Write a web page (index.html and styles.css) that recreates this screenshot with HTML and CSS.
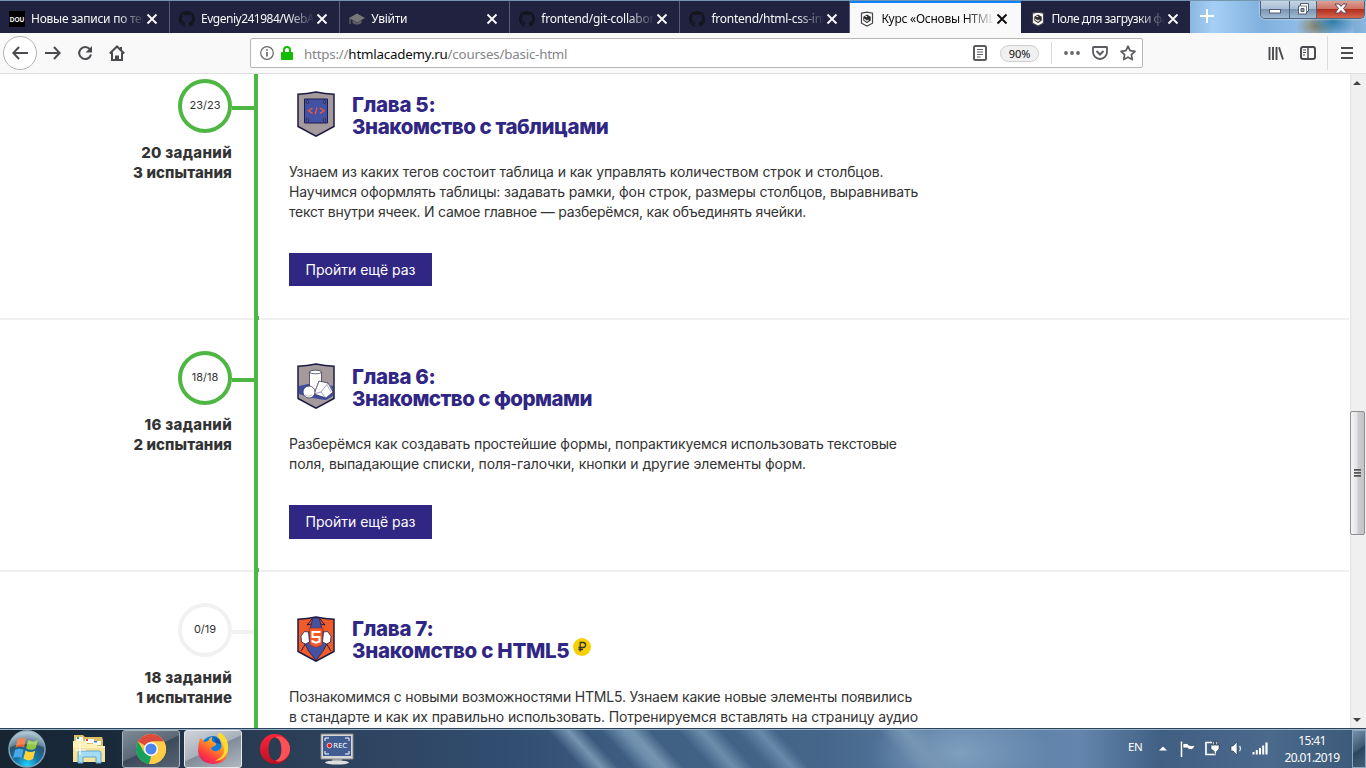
FILE: index.html
```html
<!DOCTYPE html>
<html lang="ru">
<head>
<meta charset="utf-8">
<title>Курс «Основы HTML»</title>
<link rel="stylesheet" href="styles.css">
</head>
<body>
<svg class="defs" aria-hidden="true">
  <defs>
    <symbol id="x" viewBox="0 0 12 12"><path d="M1.5 1.5l9 9M10.5 1.5l-9 9" stroke="currentColor" stroke-width="1.9" fill="none"/></symbol>
    <symbol id="github" viewBox="0 0 16 16"><path fill="#14151f" d="M8 0C3.58 0 0 3.58 0 8c0 3.54 2.29 6.53 5.47 7.59.4.07.55-.17.55-.38v-1.49c-2.01.37-2.53-.49-2.69-.94-.09-.23-.48-.94-.82-1.13-.28-.15-.68-.52-.01-.53.63-.01 1.08.58 1.23.82.72 1.21 1.87.87 2.33.66.07-.52.28-.87.51-1.07-1.78-.2-3.64-.89-3.64-3.95 0-.87.31-1.59.82-2.15-.08-.2-.36-1.02.08-2.12 0 0 .67-.21 2.2.82a7.5 7.5 0 0 1 4 0c1.53-1.04 2.2-.82 2.2-.82.44 1.1.16 1.92.08 2.12.51.56.82 1.27.82 2.15 0 3.07-1.87 3.75-3.65 3.95.29.25.54.73.54 1.48v2.2c0 .21.15.46.55.38A8.01 8.01 0 0 0 16 8c0-4.42-3.58-8-8-8z"/></symbol>
    <symbol id="academy" viewBox="0 0 16 16"><path d="M2.500 2.200L8 1.200l5.500 1v10L8 15l-5.500-2.800z" fill="#fff" stroke="#444" stroke-width="1.200"/><path d="M4.300 5.700L8 3.500l3.700 2.200v3.800L8 12.300 4.300 9.500z" fill="#2c2c2c"/><path d="M5 7.500l3 1.700 1.500-1v1.800L8 11 5 9z" fill="#ddd"/><path d="M7 4.700l1.500.8-1 .8-1.500-.8z" fill="#fff"/></symbol>
    <symbol id="shield" viewBox="0 0 38 46"><path d="M1 3.200Q10 2.800 19 1q9 1.800 18 2.200V35.500L19 45.200 1 35.500z" stroke="#1b1b45" stroke-width="1.500"/></symbol>
  </defs>
</svg>

<header class="browser">
  <div class="tabs">
    <div class="tab"><span class="dou">DOU</span><span class="tab-title">Новые записи по тем</span><svg class="close"><use href="#x"/></svg></div>
    <div class="tab"><svg class="fav"><use href="#github"/></svg><span class="tab-title tight">Evgeniy241984/WebApp</span><svg class="close"><use href="#x"/></svg></div>
    <div class="tab"><svg class="fav" viewBox="0 0 16 16"><path d="M0 7l8-4.500L16 7l-8 4.500z" fill="#777"/><path d="M3.500 9v3q4.500 3 9 0V9L8 11.700z" fill="#606060"/><path d="M1 7v6" stroke="#777"/></svg><span class="tab-title">Увійти</span><svg class="close"><use href="#x"/></svg></div>
    <div class="tab"><svg class="fav"><use href="#github"/></svg><span class="tab-title">frontend/git-collabora</span><svg class="close"><use href="#x"/></svg></div>
    <div class="tab"><svg class="fav"><use href="#github"/></svg><span class="tab-title">frontend/html-css-intro</span><svg class="close"><use href="#x"/></svg></div>
    <div class="tab active"><svg class="fav"><use href="#academy"/></svg><span class="tab-title">Курс «Основы HTML»</span><svg class="close"><use href="#x"/></svg></div>
    <div class="tab last"><svg class="fav"><use href="#academy"/></svg><span class="tab-title tight">Поле для загрузки фа</span><svg class="close"><use href="#x"/></svg></div>
    <div class="glass">
      <svg class="plus" viewBox="0 0 14 14"><path d="M7 0v14M0 7h14" stroke="#fff" stroke-width="2"/></svg>
      <div class="window-buttons">
        <span class="wb min"><svg width="28" height="17" viewBox="0 0 28 17"><rect x="8.500" y="8.500" width="11" height="3.500" fill="#fff" stroke="#555a70"/></svg></span>
        <span class="wb restore"><svg width="26" height="17" viewBox="0 0 26 17"><path d="M10.500 2.500h8v8h-2v2.500h-8v-8h2z" fill="#fff" stroke="#555a70"/><path d="M11 7.500h3v3h-3z" fill="#8ca1bb" stroke="#555a70"/><path d="M11 5h5.500v6" fill="none" stroke="#777e91"/></svg></span>
        <span class="wb shut"><svg width="47" height="17" viewBox="0 0 47 17"><path d="M18 3h4l2 2.500L26 3h4l-3.500 4.500L30 12h-4l-2-2.500L22 12h-4l3.500-4.500z" fill="#fff" stroke="#604655"/></svg></span>
      </div>
    </div>
  </div>
  <div class="toolbar">
    <span class="back"><svg width="16" height="14" viewBox="0 0 16 14"><path d="M7 1L1.300 7 7 13M1.500 7H16" fill="none" stroke="#4a4a4f" stroke-width="2"/></svg></span>
    <svg class="fwd" width="16" height="14" viewBox="0 0 16 14"><path d="M9 1l5.700 6L9 13M14.500 7H0" fill="none" stroke="#4a4a4f" stroke-width="2"/></svg>
    <svg class="reload" width="16" height="16" viewBox="0 0 16 16"><path d="M12.800 4.200A6 6 0 1 0 14 9.500" fill="none" stroke="#4a4a4f" stroke-width="2"/><path d="M15 1v6.500H8.500z" fill="#4a4a4f"/></svg>
    <svg class="home" width="16" height="16" viewBox="0 0 16 16"><path d="M.800 8.500L8 1.500l7.200 7M3 7.500V15h10V7.500" fill="none" stroke="#4a4a4f" stroke-width="2"/><path d="M6 15v-4.500h4V15zM11 2h2v4l-2-2z" fill="#4a4a4f"/></svg>
    <div class="urlbar">
      <svg class="info" width="14" height="14" viewBox="0 0 14 14"><circle cx="7" cy="7" r="6.300" fill="none" stroke="#666" stroke-width="1.200"/><path d="M7 6v4.500M7 3.300v1.500" stroke="#555" stroke-width="1.500"/></svg>
      <svg class="lock" width="12" height="14" viewBox="0 0 12 14"><path d="M3 7V4a3 3 0 0 1 6 0v3" fill="none" stroke="#12bc00" stroke-width="2"/><rect y="6" width="12" height="8" rx="1" fill="#12bc00"/></svg>
      <span class="url">https://<b>htmlacademy.ru</b>/courses/basic-html</span>
      <svg class="reader" width="14" height="16" viewBox="0 0 14 16"><rect x="1" y="1" width="12" height="14" rx="1.500" fill="none" stroke="#5c5c60" stroke-width="2"/><path d="M4 4.500h6M4 7h6M4 9.500h6M4 12h3.500" stroke="#5c5c60"/></svg>
      <span class="zoom">90%</span>
      <span class="divider"></span>
      <svg class="dots" width="16" height="4" viewBox="0 0 16 4"><g fill="#66666a"><circle cx="2" cy="2" r="1.900"/><circle cx="8" cy="2" r="1.900"/><circle cx="14" cy="2" r="1.900"/></g></svg>
      <svg class="pocket" width="16" height="15" viewBox="0 0 16 15"><path d="M1.500 1h13q.5 0 .5.5V6a7 7 0 0 1-14 0V1.500q0-.5.5-.5z" fill="none" stroke="#5c5c60" stroke-width="1.800"/><path d="M4.500 5L8 8.500 11.500 5" fill="none" stroke="#5c5c60" stroke-width="2"/></svg>
      <svg class="star" width="16" height="16" viewBox="0 0 16 16"><path d="M8 1.200l2.100 4.500 4.900.6-3.600 3.400.9 4.900L8 12.200l-4.300 2.400.9-4.900L1 6.300l4.900-.6z" fill="none" stroke="#5c5c60" stroke-width="1.700" stroke-linejoin="round"/></svg>
    </div>
    <svg class="library" width="16" height="14" viewBox="0 0 16 14"><path d="M1.500 1v13M5 1v13M8.500 1v13M11 1.200L15 13.500" stroke="#4a4a4f" stroke-width="1.900"/></svg>
    <svg class="sidebar" width="16" height="14" viewBox="0 0 16 14"><rect x="1" y="1" width="14" height="12" rx="2" fill="none" stroke="#4a4a4f" stroke-width="2"/><path d="M8 1v12" stroke="#4a4a4f" stroke-width="1.500"/><path d="M3 4h3M3 6.500h3M3 9h2" stroke="#4a4a4f"/></svg>
    <span class="menu"><svg width="12" height="12" viewBox="0 0 12 12"><path d="M0 1h12M0 6h12M0 11h12" stroke="#4a4a4f" stroke-width="2"/></svg></span>
  </div>
</header>

<div class="viewport">
  <main class="course">
    <section class="chapter first">
      <div class="progress"><div class="ring">23/23</div><p class="tasks"><span class="count">20 заданий</span><br><span>3 испытания</span></p></div>
      <div class="body">
        <div class="head">
          <svg class="badge" viewBox="0 0 38 46"><use href="#shield" fill="#a49a9c"/><path d="M7.500 8h23v24h-23z" fill="#4352a3" stroke="#1b1b55"/><g fill="#56669b" stroke="#1b1b45" stroke-width=".7"><circle cx="10.500" cy="11" r="1.400"/><circle cx="27.500" cy="11" r="1.400"/><circle cx="10.500" cy="29" r="1.400"/><circle cx="27.500" cy="29" r="1.400"/></g><path d="M15.500 17L11.500 19.700l4 2.700M23 17l4 2.700-4 2.700M20 16.500l-1.800 6.500" fill="none" stroke="#f1583a" stroke-width="1.300"/></svg>
          <h2><span class="h">Глава 5:</span><br><span class="h5">Знакомство с таблицами</span></h2>
        </div>
        <p class="text"><span class="l1">Узнаем из каких тегов состоит таблица и как управлять количеством строк и столбцов.</span><br><span class="l2">Научимся оформлять таблицы: задавать рамки, фон строк, размеры столбцов, выравнивать</span><br><span class="l3">текст внутри ячеек. И самое главное — разберёмся, как объединять ячейки.</span></p>
        <a class="again">Пройти ещё раз</a>
      </div>
    </section>
    <section class="chapter">
      <div class="progress"><div class="ring">18/18</div><p class="tasks"><span class="count">16 заданий</span><br><span>2 испытания</span></p></div>
      <div class="body">
        <div class="head">
          <svg class="badge" viewBox="0 0 38 46"><use href="#shield" fill="#a49a9c"/><path d="M2 23l9-2h17l8 2v10l-7 4q-12-1-27-6z" fill="#3e4da0"/><g fill="#fff" stroke="#25254c" stroke-width=".7"><path d="M12.500 9v18q6 2 12 0V9z"/><ellipse cx="18.500" cy="9" rx="6" ry="1.800"/><path d="M22 18l9 2 5 9-7 6-12-4z"/><path d="M22 18l-5 13 7-2 7-9M24 29l5 6" fill="none" stroke="#77778e"/><circle cx="12" cy="29" r="6"/><path d="M8 32q3 2.500 7 0M30 22l4 7M32 21l3 6" fill="none" stroke="#9a9aad"/></g></svg>
          <h2><span class="h">Глава 6:</span><br><span class="h6">Знакомство с формами</span></h2>
        </div>
        <p class="text"><span class="l4">Разберёмся как создавать простейшие формы, попрактикуемся использовать текстовые</span><br><span class="l5">поля, выпадающие списки, поля-галочки, кнопки и другие элементы форм.</span></p>
        <a class="again">Пройти ещё раз</a>
      </div>
    </section>
    <section class="chapter todo">
      <div class="progress"><div class="ring">0/19</div><p class="tasks"><span class="count">18 заданий</span><br><span>1 испытание</span></p></div>
      <div class="body">
        <div class="head">
          <svg class="badge" viewBox="0 0 38 46"><use href="#shield" fill="#f15a29"/><path d="M15.500 2.500L19 1.500l3.500 1 2 9 6 15-4 8L19 44.500 11.500 35l-4-8 6-15z" fill="#4352a3" stroke="#1b1b45" stroke-width=".7"/><path d="M15 3l-5 6 4-1M23 3l5 6-4-1M4 35l5-8M34 35l-5-8" stroke="#1b1b45" fill="none"/><path d="M12 12h14l-1 17-6 2.500-6-2.500z" fill="#f15a29" stroke="#8b2f31" stroke-width=".7"/><path d="M23.500 16h-8v5h7v4.500L19 26.800l-3.500-1.300v-1.500" fill="none" stroke="#fff" stroke-width="2"/><path d="M4 20l3.500-4.500 4 .5 1 10-4 2-4-2zM34 20l-3.500-4.500-4 .5-1 10 4 2 4-2z" fill="#fff" stroke="#25254c" stroke-width=".8"/></svg>
          <h2><span class="h">Глава 7:</span><br><span class="h7">Знакомство с HTML5</span><svg class="coin" viewBox="0 0 18 18"><circle cx="9" cy="9" r="9" fill="#f8d000"/><path d="M7.200 13.500v-9h2.900a2.500 2.500 0 0 1 0 5H5.500M5.500 11.500h4.500" fill="none" stroke="#333" stroke-width="1.300"/></svg></h2>
        </div>
        <p class="text"><span class="l6">Познакомимся с новыми возможностями HTML5. Узнаем какие новые элементы появились</span><br><span class="l7">в стандарте и как их правильно использовать. Потренируемся вставлять на страницу аудио</span></p>
      </div>
    </section>
  </main>
  <aside class="scroll">
    <svg class="up" width="8" height="4" viewBox="0 0 8 4"><path d="M0 4l4-4 4 4z" fill="#444"/></svg>
    <div class="thumb"><i></i><i></i><i></i></div>
    <svg class="down" width="8" height="4" viewBox="0 0 8 4"><path d="M0 0l4 4 4-4z" fill="#444"/></svg>
  </aside>
</div>

<footer class="taskbar">
  <svg class="orb" width="40" height="38" viewBox="0 0 40 38"><defs><radialGradient id="orb" cx=".5" cy=".95" r=".9"><stop offset="0" stop-color="#21d5ff"/><stop offset=".35" stop-color="#1678ad"/><stop offset=".7" stop-color="#2c536f"/><stop offset="1" stop-color="#9cb9c9"/></radialGradient></defs><circle cx="20" cy="19" r="18" fill="url(#orb)" stroke="#7fa3b6" stroke-width="1.500"/><path d="M10.500 9.500q4-3 8.500-.5l-2 8.500q-4-2.300-8.500.2z" fill="#f0652b"/><path d="M21 10q5 3 10-.3l-2.300 8.500q-5 3-9.500 0z" fill="#93c83e"/><path d="M8 20q4.500-2.500 8.500-.2l-2 8.200q-4-2.200-8.500.2z" fill="#48a8e9"/><path d="M18.500 20.500q5 3 9.800.2L26 29q-5 3-9.500-.4z" fill="#ffd23b"/><path d="M3 17A17 17 0 0 1 37 17Q20 11 3 17z" fill="#fff" opacity=".22"/></svg>
  <svg class="explorer" width="34" height="32" viewBox="0 0 34 32"><path d="M2 2h9l2 2h17l1 3v20H2z" fill="#d9bd62"/><path d="M4 4h7v4H4zM13 6h9v4h-9zM21 8h8v4h-8z" fill="#fff"/><path d="M5 4h2v2H5z" fill="#25a55a"/><path d="M14 6h2v2h-2z" fill="#d54a28"/><path d="M22 8h3v1.500h-3z" fill="#2b83d0"/><path d="M1 8h12l2 3h8l2 2h8v16H1z" fill="#f5e39b"/><path d="M1 8h12l2 3h8l2 2h8v2H1z" fill="#fff2b8"/><path d="M6 30V20q0-2 2-2h19q2 0 2 2v10h-5v-6H11v6z" fill="#a4ddf3" stroke="#63a5c8"/><path d="M8 11v11M3 17h11" stroke="#fff" stroke-width="1.200"/></svg>
  <span class="app"><svg width="32" height="32" viewBox="0 0 32 32"><circle cx="16" cy="16" r="15" fill="#fbc94b"/><path d="M16 16L3 8.500A15 15 0 0 1 29 8.500H16z" fill="#dc4a3d"/><path d="M3 8.500l6.500 11.200 6.500 3.800L14 31A15 15 0 0 1 3 8.500z" fill="#18a05f"/><path d="M22.500 19.700L14 31h2A15 15 0 0 0 29 8.500H16z" fill="#ffcd46"/><circle cx="16" cy="16" r="7" fill="#fff"/><circle cx="16" cy="16" r="5.600" fill="#4a86ee"/></svg></span>
  <span class="app on"><svg width="32" height="32" viewBox="0 0 32 32"><defs><linearGradient id="fox" x1=".8" y1="0" x2=".2" y2="1"><stop offset="0" stop-color="#fff33a"/><stop offset=".4" stop-color="#ff9522"/><stop offset=".75" stop-color="#ff3b40"/><stop offset="1" stop-color="#e41673"/></linearGradient></defs><circle cx="16" cy="15" r="12" fill="#087ee1"/><path d="M16 4q6 1 8 7l-5-1z" fill="#154bb7"/><path d="M3 5q3 1 4 4l4-1q2-4 4-4-1 3 1 5 4 1 3 3l-5 3q2 4 6 3 6-2 4-8-1-5-4-6 1-4 3-4 9 5 8 17-1 14-15 14Q2 30 1 18 1 11 3 5z" fill="url(#fox)"/><path d="M21 4q1-3 3-4 8 7 7 17-3 11-13 11 11-5 9-13-1-6-6-11z" fill="#ffdb31"/></svg></span>
  <svg class="opera" width="32" height="32" viewBox="0 0 32 32"><defs><linearGradient id="op" x2=".1" y2="1"><stop stop-color="#ff2638"/><stop offset="1" stop-color="#bd1022"/></linearGradient></defs><path fill-rule="evenodd" d="M16 1a15 15 0 1 0 0 30 15 15 0 1 0 0-30zm0 3.500c4 0 6.500 5 6.500 11.500S20 27.500 16 27.500 9.500 22.500 9.500 16 12 4.500 16 4.500z" fill="url(#op)"/><path d="M16 4.500q4-2.500 8.500.5Q31 9 31 16t-6.500 11q-4.500 3-8.500.5c4 0 6.500-5 6.500-11.500S20 4.500 16 4.500z" fill="#fd5057"/></svg>
  <svg class="rec" width="34" height="32" viewBox="0 0 34 32"><path d="M1 1h32v25H1z" fill="#d8d8d8" stroke="#888"/><path d="M3 3h28v20H3z" fill="#405c90"/><path d="M5 8V5h4M25 5h4v3M29 18v3h-4M9 21H5v-3" fill="none" stroke="#fff"/><path d="M12 26h10v3H12z" fill="#999"/><ellipse cx="17" cy="29.500" rx="12" ry="2" fill="#ddd"/><circle cx="9.500" cy="12.500" r="2.400" fill="#e21b25" stroke="#fff" stroke-width=".7"/><text x="13.300" y="15.300" class="rec-label">REC</text></svg>
  <div class="tray">
    <span class="lang">EN</span>
    <svg class="caret" width="8" height="5" viewBox="0 0 8 5"><path d="M0 4.500L4 .5l4 4z" fill="#fff"/></svg>
    <svg class="flag" width="16" height="16" viewBox="0 0 16 16"><path d="M1.500.5V16" stroke="#fff" stroke-width="1.500"/><path d="M3 2.500h4.500l1 1.500q3 1.500 6.500 0-1 4-3.500 4.500-3 .5-4-1.500H3z" fill="#fff" stroke="#26384c" stroke-width=".6"/></svg>
    <svg class="plug" width="16" height="17" viewBox="0 0 16 17"><path d="M8 2.500H2v12h9v-3" fill="none" stroke="#fff" stroke-width="1.700"/><path d="M7 5h8v4l-2.500 2.500V14h-2v-2.500L7 9zM8.500 1.500H10V5H8.500zM12 1.500h1.500V5H12z" fill="#fff" stroke="#26384c" stroke-width=".6"/></svg>
    <svg class="sound" width="14" height="16" viewBox="0 0 14 16"><path d="M1 5h2l4-4v13l-4-4H1z" fill="#fff" stroke="#26384c" stroke-width=".6"/><path d="M9.500 5q2 2.500 0 5" fill="none" stroke="#d8e4ed" stroke-width="1.300"/></svg>
    <svg class="signal" width="17" height="13" viewBox="0 0 17 13"><g fill="#fff"><path d="M.5 10h2v2.500h-2zM3.800 8h2v4.500h-2zM7 6h2v6.500H7zM10.200 3.500h2v9h-2zM13.400.5h2.200v12h-2.200z"/></g></svg>
    <div class="clock"><span>15:41</span><span>20.01.2019</span></div>
    <span class="desktop"></span>
  </div>
</footer>
</body>
</html>
```

FILE: styles.css
```css
* { box-sizing: border-box; }
body { margin: 0; width: 1366px; height: 768px; overflow: hidden; display: flex; flex-direction: column; background: #fff; font-family: "Noto Sans", "Open Sans", sans-serif; }
svg { flex: none; display: block; }
.defs { position: absolute; width: 0; height: 0; }

/* Browser chrome */
.browser { flex: none; height: 74px; }
.tabs { display: flex; height: 33px; border-top: 1px solid #7294ae; }
.tab { flex: none; display: flex; align-items: center; width: 170.1px; padding: 3px 0 0 9px; background: #20223f; color: #f9f9fa; border-right: 1px solid #5b5d76; font-size: 12px; }
.tab.active { background: #f9f9fa; color: #0c0c0d; border-top: 2px solid #0a84ff; padding-top: 1px; border-right: 0; }
.tab.last { width: 169.7px; border-right: 0; }
.fav { width: 16px; height: 16px; margin-right: 6px; }
.dou { width: 16px; height: 16px; margin-right: 6px; background: #000; color: #fff; font: bold 6.5px/17px "Liberation Sans", sans-serif; text-align: center; }
.tab-title { width: 112px; overflow: hidden; white-space: nowrap; line-height: 18px; letter-spacing: -.25px; -webkit-mask-image: linear-gradient(90deg, #000 86px, transparent 114px); mask-image: linear-gradient(90deg, #000 86px, transparent 114px); }
.tab-title.tight { letter-spacing: -.5px; }
.close { width: 12px; height: 12px; margin-left: 3px; }
.glass { flex: 1; display: flex; justify-content: space-between; padding-left: 10px; background: radial-gradient(ellipse 24px 17px at 155px 20px, #2e7ca7, transparent), radial-gradient(ellipse 20px 13px at 138px 25px, #8e8262, transparent), linear-gradient(90deg, #7cabd3, #a5cff5 20%, #80b0dd 48%, #94c0ea 75%, #8ab5dd); background-position: -12px 0; }
.plus { width: 14px; height: 14px; margin-top: 8px; }
.window-buttons { display: flex; height: 18px; margin-right: 1px; border: 1px solid #51627c; border-top: 0; border-radius: 0 0 5px 5px; overflow: hidden; box-shadow: 0 0 2px #fff; }
.wb { background: linear-gradient(#c6d5e4, #a9bfd5 45%, #7893b0 48%, #9fbbd3); border-right: 1px solid #51627c; }
.wb.shut { border: 0; background: linear-gradient(#dba193, #cd7364 45%, #b12c1b 48%, #d36650); }
.toolbar { display: flex; align-items: center; height: 41px; padding-left: 3px; background: #f9f9fa; border-bottom: 1px solid #e0e0e1; }
.back { display: flex; align-items: center; justify-content: center; width: 34px; height: 34px; border: 1px solid #b3b3b5; border-radius: 50%; background: #fff; }
.fwd { margin-left: 8px; }
.reload { margin-left: 16px; }
.home { margin-left: 16px; }
.urlbar { display: flex; align-items: center; width: 893px; height: 30px; margin-left: 125px; padding-left: 9px; background: #fff; border: 1px solid #b7b7b8; border-radius: 2px; }
.lock { margin-left: 7px; }
.url { width: 669px; margin-left: 11px; padding-top: 1px; color: #85858a; font-size: 13.33px; letter-spacing: -.2px; white-space: nowrap; }
.url b { color: #0c0c0d; font-weight: 400; }
.zoom { width: 39px; height: 17px; margin-left: 13px; border: 1px solid #cdcdcf; border-radius: 9px; background: #f0f0f1; color: #0c0c0d; font-size: 11px; line-height: 16px; text-align: center; letter-spacing: -.1px; }
.divider { width: 1px; height: 22px; margin-left: 12px; background: #dcdcde; }
.dots { margin-left: 12px; }
.pocket { margin-left: 12px; }
.star { margin-left: 12px; }
.library { margin-left: 125px; }
.sidebar { margin-left: 16px; }
.menu { display: flex; align-items: center; height: 34px; margin-left: 11px; padding-left: 13px; border-left: 1px solid #dcdcde; }

/* Course page */
.viewport { flex: none; display: flex; height: 654px; overflow: hidden; }
.course { flex: none; width: 1349px; margin-top: -26px; color: #333; font-family: "Inter", "Noto Sans", sans-serif; }
.chapter { display: flex; height: 252px; border-bottom: 2px solid #efefef; }
.chapter.first { height: 272px; }
.progress { flex: none; display: flex; flex-direction: column; align-items: flex-end; width: 254px; padding: 31px 22px 0 0; background: linear-gradient(#4eb642, #4eb642) 232px 58px / 22px 4px no-repeat; }
.todo .progress { background-image: linear-gradient(#f1f1f1, #f1f1f1); }
.ring { width: 54px; height: 54px; border: 4px solid #4eb642; border-radius: 50%; font-size: 11px; line-height: 44px; text-align: center; }
.todo .ring { border-color: #f1f1f1; line-height: 45px; }
.tasks { margin: 10px 0 0; font-size: 15px; line-height: 19.8px; font-weight: 800; text-align: right; white-space: nowrap; letter-spacing: .1px; }
.count { letter-spacing: .32px; }
.todo .tasks { margin-top: 11px; }
.body { display: flex; flex-direction: column; align-items: flex-start; margin-bottom: -2px; padding: 43px 0 0 31px; border-left: 4px solid #4eb642; background: linear-gradient(#4eb642, #4eb642) 0 100% / 1px 4px no-repeat; }
.todo .body { padding-top: 44px; }
.head { display: flex; height: 71px; padding-left: 8px; }
.badge { width: 38px; height: 46px; }
h2 { margin: 3px 0 0 17px; color: #302683; font-size: 20.5px; line-height: 21.6px; font-weight: 800; white-space: nowrap; }
.todo h2 { margin-top: 2px; }
.h { letter-spacing: -.3px; }
.h5 { letter-spacing: -.43px; }
.h6 { letter-spacing: -.54px; }
.h7 { letter-spacing: -.28px; }
.text { margin: 0 0 31.6px; font-size: 14px; line-height: 19.8px; white-space: nowrap; }
.l1, .l2, .l7 { letter-spacing: -.12px; }
.l3 { letter-spacing: -.235px; }
.l4 { letter-spacing: -.14px; }
.l5 { letter-spacing: -.085px; }
.l6 { letter-spacing: -.18px; }
.again { width: 143px; height: 33.4px; background: #302683; color: #fff; font-size: 14px; line-height: 33px; text-align: center; }
.coin { display: inline-block; width: 18px; height: 18px; margin-left: 4px; vertical-align: -1px; transform: translateY(-3px); }
.scroll { flex: none; display: flex; flex-direction: column; align-items: center; width: 17px; padding-right: 1px; background: linear-gradient(90deg, #fff 1px, #e3e3e3 1px, #f0f0f0 20%, #f0f0f0); }
.up { margin-top: 7px; }
.thumb { display: flex; flex-direction: column; align-items: center; justify-content: center; gap: 1px; width: 15px; height: 124px; margin: 326px -1px 0 0; border: 1px solid #8e8e92; border-radius: 2px; background: linear-gradient(90deg, #f5f5f5, #e4e4e6 45%, #cdcdd1 55%, #c2c2c7); }
.thumb i { width: 7px; height: 2px; background: linear-gradient(#444, #888); }
.down { margin-top: 183px; }

/* Taskbar */
.taskbar {
  flex: none; display: flex; align-items: center; height: 40px; padding-left: 7px; border-top: 1px solid #2c4259; box-shadow: inset 0 1px #9bb5ca;
  background:
    linear-gradient(48deg, transparent 32%, #7594b0 46%, transparent 58%) 535px 0 / 110px 100% no-repeat,
    linear-gradient(48deg, transparent 32%, #6f90ad 46%, #7594b0 52%, transparent 64%) 585px 0 / 120px 100% no-repeat,
    linear-gradient(48deg, transparent 32%, #6d8eab 48%, transparent 62%) 665px 0 / 110px 100% no-repeat,
    linear-gradient(48deg, transparent 34%, #6889a8 50%, transparent 62%) 720px 0 / 110px 100% no-repeat,
    linear-gradient(48deg, transparent 34%, #7796b4 50%, transparent 66%) 860px 0 / 120px 100% no-repeat,
    radial-gradient(ellipse 90px 50px at 960px 24px, #7f9fbd, transparent),
    linear-gradient(90deg, #172532, #1a2a3b 8%, #283b51 18%, #2f4562 28%, #314d70 37%, #3f5f83 47%, #456589 60%, #5b7fa6 70%, #6486ae 79%, #405f83 85%, #4a698b 93%, #3b5877);
}
.explorer { margin-left: 25px; }
.app { display: flex; align-items: center; justify-content: center; width: 58px; height: 38px; margin: 0 0 0 16px; border: 1px solid #aab2ba; border-radius: 3px; background: linear-gradient(155deg, #7f8b98, #5a6877 48%, #3c4b5b 50%, #566372); }
.app.on { margin-left: 4px; border-color: #e5e9ee; background: linear-gradient(155deg, #d0d5dc, #a8b0ba 48%, #818c99 50%, #b0b7c0); }
.opera { margin-left: 17px; }
.rec { margin-left: 29px; }
.rec-label { fill: #fff; font: 7px "DejaVu Sans", sans-serif; }
.tray { display: flex; align-items: center; flex: 1; height: 39px; margin-left: 774px; color: #fff; font-size: 12px; }
.lang { width: 16px; margin-top: -5px; letter-spacing: -.3px; font-size: 11.5px; }
.caret { margin-left: 15px; }
.flag { margin-left: 13px; }
.plug { margin-left: 8px; }
.sound { margin-left: 10px; }
.signal { margin-left: 8px; }
.clock { display: flex; flex-direction: column; align-items: center; width: 56px; margin-left: 15px; line-height: 17px; letter-spacing: -.65px; font-size: 12px; }
.desktop { width: 14px; height: 38px; margin-left: auto; border: 1px solid #8ba5bc; background: linear-gradient(145deg, #7590aa, #3e5874 50%, #294560 52%, #456079); }
```
